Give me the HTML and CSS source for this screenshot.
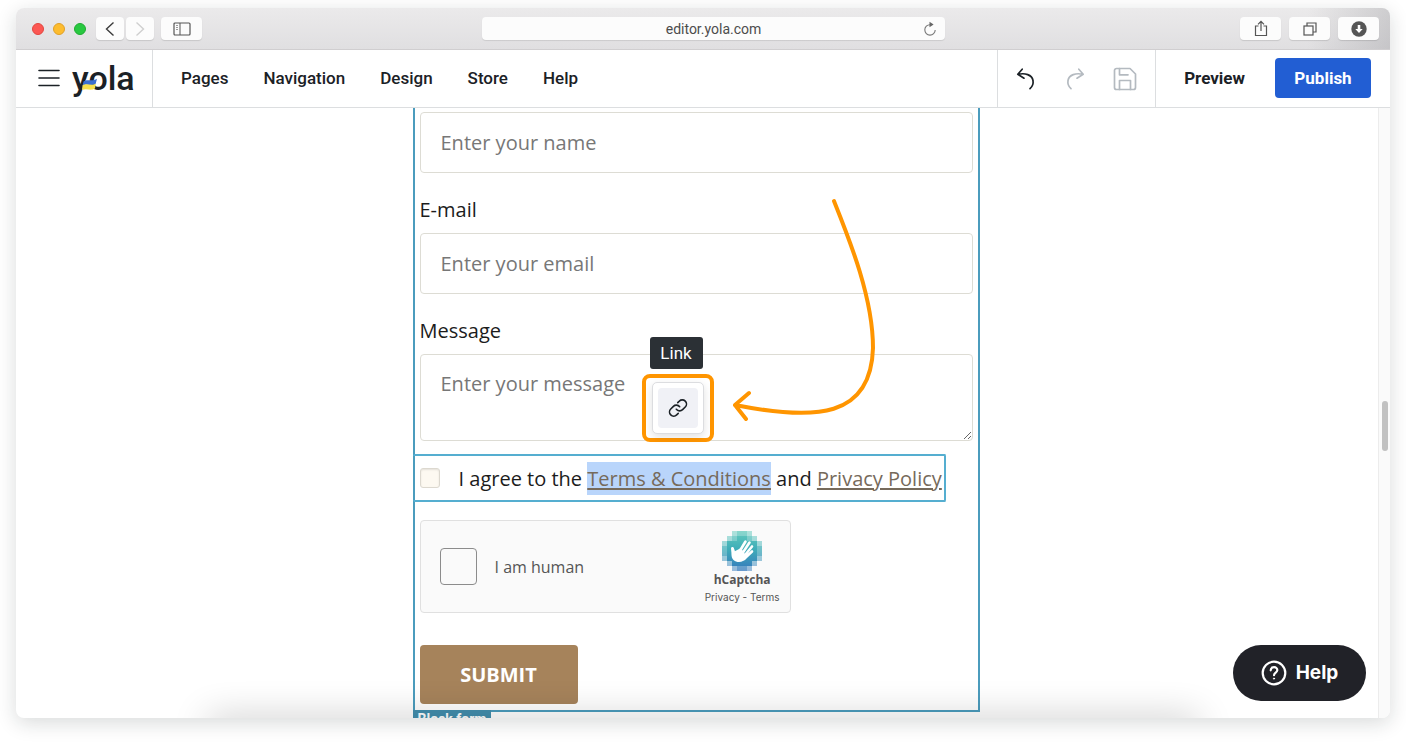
FILE: index.html
```html
<!DOCTYPE html>
<html lang="en">
<head>
<meta charset="utf-8">
<meta name="viewport" content="width=device-width, initial-scale=1">
<title>Yola editor</title>
<link rel="stylesheet" href="styles.css">
</head>
<body>
<div class="window">
  <div class="titlebar">
    <div class="titlebar-left">
      <span class="lights"><i class="light red"></i><i class="light amber"></i><i class="light green"></i></span>
      <span class="history">
        <button class="chrome-btn small" aria-label="Back"><svg width="12" height="16" viewBox="0 0 12 16"><path d="M9.500 1.500 2.500 8l7 6.500" fill="none" stroke="#3c3c3c" stroke-width="1.400"/></svg></button>
        <button class="chrome-btn small" aria-label="Forward"><svg width="12" height="16" viewBox="0 0 12 16"><path d="M2.500 1.500 9.500 8l-7 6.500" fill="none" stroke="#cfcfcf" stroke-width="1.400"/></svg></button>
      </span>
      <button class="chrome-btn" aria-label="Sidebar"><svg width="18" height="14" viewBox="0 0 18 14" fill="none" stroke="#555"><rect x="1" y="1" width="16" height="12" rx="1" stroke-width="1.200"/><path d="M7 1v12"/><path d="M3 3.500h2M3 5.500h2M3 7.500h2" stroke="#999"/></svg></button>
    </div>
    <div class="address"><span>editor.yola.com</span>
      <button class="reload" aria-label="Reload"><svg width="14" height="16" viewBox="0 0 14 16"><path d="M7 3.700A5.200 5.200 0 1 0 12.200 9" fill="none" stroke="#777" stroke-width="1.100"/><path d="M6.500.8 10.600 3.600 6.500 6.200z" fill="#666"/></svg></button>
    </div>
    <div class="titlebar-right">
      <button class="chrome-btn" aria-label="Share"><svg width="14" height="17" viewBox="0 0 14 17" fill="none" stroke="#555" stroke-width="1.200"><path d="M4.500 6H1.500v9.500h11V6h-3M7 11V1.500M4 4.300l3-3 3 3"/></svg></button>
      <button class="chrome-btn" aria-label="Tabs"><svg width="14" height="14" viewBox="0 0 14 14" fill="none" stroke="#555" stroke-width="1.200"><rect x="1" y="4" width="9" height="9"/><path d="M4 4V1h9v9h-3"/></svg></button>
      <button class="chrome-btn" aria-label="Downloads"><svg width="16" height="16" viewBox="0 0 16 16"><circle cx="8" cy="8" r="7.700" fill="#555"/><path d="M6.700 4h2.600v4h2.400L8 12 4.300 8h2.400z" fill="#fff"/></svg></button>
    </div>
  </div>

  <header class="toolbar">
    <div class="brand">
      <button class="icon-btn" aria-label="Menu"><svg width="22" height="18" viewBox="0 0 22 18"><path d="M1 1.500h20M1 9h20M1 16.500h20" stroke="#1b2126" stroke-width="1.600" stroke-linecap="round"/></svg></button>
      <a class="logo" href="#">yola<svg class="flag" width="16" height="13" viewBox="0 0 16 13"><path d="M1.500 3.500C5 .5 10 4 15 .8L13.600 6C9 8.600 5 4.800.5 8z" fill="#3b6fd0"/><path d="M.5 7.500C5 4.600 9 8.500 13.800 5.700L13 10.500C8 13.500 5 9.500 0 12z" fill="#f8e04c"/></svg></a>
    </div>
    <nav class="menu">
      <a href="#">Pages</a><a href="#">Navigation</a><a href="#">Design</a><a href="#">Store</a><a href="#">Help</a>
    </nav>
    <div class="history-tools">
      <button class="icon-btn" aria-label="Undo"><svg width="20" height="22" viewBox="0 0 20 22" fill="none" stroke="#1b2126" stroke-width="1.700" stroke-linecap="round" stroke-linejoin="round"><path d="M6.200 1.200 1.800 6.300 8 10.200M2 6.300C9 4.800 16 6.500 17 12.500 17.500 15.600 16.500 18.500 14 20.700"/></svg></button>
      <button class="icon-btn" aria-label="Redo"><svg width="20" height="22" viewBox="0 0 20 22" fill="none" stroke="#b4bac0" stroke-width="1.700" stroke-linecap="round" stroke-linejoin="round"><path d="M13.800 1.200 18.200 6.300 12 10.200M18 6.300C11 4.800 4 6.500 3 12.500 2.500 15.600 3.500 18.500 6 20.700"/></svg></button>
      <button class="icon-btn" aria-label="Save"><svg width="24" height="24" viewBox="0 0 24 24" fill="none" stroke="#b4bac0" stroke-width="1.700" stroke-linejoin="round" stroke-linecap="round"><path d="M3.500 1.500H17L22.500 7v13.500a2 2 0 0 1-2 2h-17a2 2 0 0 1-2-2v-17a2 2 0 0 1 2-2z"/><path d="M6.500 1.500v6.300h8.500M6.500 22.500v-9h11v9"/></svg></button>
    </div>
    <div class="actions">
      <button class="preview">Preview</button>
      <button class="publish">Publish</button>
    </div>
  </header>

  <main class="workspace">
    <div class="canvas">
      <form class="block">
        <input class="field" type="text" aria-label="Name" placeholder="Enter your name">
        <label class="label" for="email">E-mail</label>
        <input class="field" id="email" type="email" placeholder="Enter your email">
        <label class="label" for="message">Message</label>
        <div class="message">
          <textarea class="field area" id="message" placeholder="Enter your message"></textarea>
          <div class="link-tool">
            <button class="link-btn" type="button" aria-label="Link"><span class="link-face"><svg width="20" height="20" viewBox="0 0 24 24" fill="none" stroke="#1b2126" stroke-width="1.900" stroke-linecap="round" stroke-linejoin="round"><path d="M10 13.500a5 5 0 0 0 7.500.5l3.200-3.200a5 5 0 0 0-7.100-7.100L11.700 5.500"/><path d="M14 10.500a5 5 0 0 0-7.500-.5l-3.200 3.200a5 5 0 0 0 7.100 7.100l1.900-1.800"/></svg></span></button>
          </div>
          <span class="tooltip" role="tooltip">Link</span>
        </div>
        <div class="consent">
          <input class="tick" id="agree" type="checkbox">
          <label for="agree">I agree to the <a class="selected" href="#">Terms &amp; Conditions</a> and <a href="#">Privacy Policy</a></label>
        </div>
        <div class="captcha">
          <input class="human-box" id="human" type="checkbox">
          <label class="human" for="human">I am human</label>
          <div class="captcha-brand">
            <svg width="40" height="40" viewBox="0 0 40 40" shape-rendering="crispEdges">
              <defs><linearGradient id="sea" x1="0" y1="0" x2="0" y2="1"><stop offset="0" stop-color="#62cbbd"/><stop offset=".45" stop-color="#3fadb8"/><stop offset="1" stop-color="#3678bd"/></linearGradient></defs>
              <path d="M10 0h20v5h5v5h5v20h-5v5h-5v5H10v-5H5v-5H0V10h5V5h5z" fill="url(#sea)"/>
              <path d="M10 0h5v5h-5zM25 0h5v5h-5zM5 5h5v5H5zM30 5h5v5h-5zM0 10h5v5H0zM35 10h5v5h-5zM0 25h5v5H0zM35 25h5v5h-5zM5 30h5v5H5zM30 30h5v5h-5zM10 35h5v5h-5zM25 35h5v5h-5z" fill="#fafafa" opacity=".5"/>
              <path d="M15 0h10v5H15zM0 15h5v10H0zM35 15h5v10h-5zM15 35h10v5H15zM10 5h5v5h-5zM25 5h5v5h-5z" fill="#fafafa" opacity=".25"/>
              <g shape-rendering="auto"><path d="M12.500 27 10.500 17.500M16 23l7.500-12.500M19 24.500 27.500 11.500M21 26.500l9-11M22 28l8-7.500" stroke="#fff" stroke-width="2.600" stroke-linecap="round"/><path d="M9.200 17c1-2 2.800-.8 3.600 3.200L19 17l6 9c-2 4-6 5.600-9.500 5-4-.8-5.800-3.500-6-7z" fill="#fff"/></g>
            </svg>
            <strong>hCaptcha</strong>
            <span class="terms"><a href="#">Privacy</a> - <a href="#">Terms</a></span>
          </div>
        </div>
        <button class="submit" type="button">SUBMIT</button>
        <span class="block-name">Block form</span>
        <svg class="arrow" width="160" height="235" viewBox="0 0 160 235" fill="none" stroke="#ff9500" stroke-width="4" stroke-linecap="round" stroke-linejoin="round"><path d="M106 8C122 48 145 105 145 155C143 225 88 228 7 212M21 200 7 212 18 226"/></svg>
      </form>
    </div>
    <div class="track"><div class="thumb"></div></div>
    <button class="help"><svg width="26" height="26" viewBox="0 0 26 26" fill="none" stroke="#fff" stroke-linecap="round"><circle cx="13" cy="13" r="11.300" stroke-width="2.200"/><path d="M9.700 10.300c.2-4.300 6.800-4 6.600-.1-.1 2.300-3.300 2.500-3.300 5" stroke-width="2.200"/><circle cx="13" cy="18.600" r=".6" fill="#fff"/></svg>Help</button>
  </main>
</div>
</body>
</html>
```
FILE: styles.css
```css
* { box-sizing: border-box; }
body {
  margin: 0;
  min-height: 100vh;
  display: flex;
  padding: 8px 16px 24px;
  background: #fff;
  font-family: Roboto, "Liberation Sans", sans-serif;
  color: #1b2126;
}
button { border: 0; padding: 0; background: none; font: inherit; color: inherit; }
a { color: inherit; text-decoration: none; }
svg { display: block; }

.window {
  position: relative;
  flex: 1;
  min-width: 0;
  display: flex;
  flex-direction: column;
  border-radius: 8px;
  overflow: hidden;
  background: #fff;
  box-shadow: 0 5px 20px rgba(20, 30, 30, .16);
}
.window::after {
  content: "";
  position: absolute;
  left: 14%;
  right: 14%;
  bottom: -20px;
  height: 20px;
  box-shadow: 0 0 36px rgba(0, 0, 0, .24);
  pointer-events: none;
}

.titlebar {
  display: grid;
  grid-template-columns: 466fr 463fr 445fr;
  align-items: center;
  height: 42px;
  border-bottom: 1px solid #d0ced0;
  background: linear-gradient(90deg, transparent 94%, rgba(120, 120, 125, .25)), linear-gradient(#ebeaeb, #e0dfe1);
}
.titlebar-left { display: flex; align-items: center; gap: 7px; padding-left: 16px; }
.lights { display: flex; gap: 9px; margin-right: 3px; }
.light { width: 12px; height: 12px; border-radius: 50%; }
.red { background: #fc5753; border: 1px solid #e2463f; }
.amber { background: #fdbc2e; border: 1px solid #e0a028; }
.green { background: #28c840; border: 1px solid #1fab31; }
.history { display: flex; gap: 2px; }
.chrome-btn {
  display: grid;
  place-items: center;
  width: 41px;
  height: 23px;
  border-radius: 4px;
  background: #fcfcfc;
  box-shadow: 0 1px 1px rgba(0, 0, 0, .12);
}
.small { width: 28px; }
.address {
  display: flex;
  align-items: center;
  height: 23px;
  padding: 0 8px 0 22px;
  border-radius: 4px;
  background: #fcfcfc;
  box-shadow: 0 1px 1px rgba(0, 0, 0, .1);
  color: #4c4c4c;
  font-size: 14px;
}
.address span { flex: 1; text-align: center; }
.titlebar-right { display: flex; justify-content: flex-end; gap: 8px; padding-right: 11px; }

.toolbar { display: flex; height: 58px; border-bottom: 1px solid #dcdee0; }
.brand, .menu, .actions { padding-bottom: 2px; }
.brand { display: flex; align-items: center; gap: 12px; width: 137px; padding-left: 22px; border-right: 1px solid #dcdee0; }
.icon-btn { display: grid; place-items: center; }
.logo { position: relative; font-size: 34px; line-height: 40px; font-weight: 500; }
.flag { position: absolute; left: 10px; top: 20px; }
.menu { flex: 1; display: flex; align-items: center; gap: 35px; padding-left: 28px; font-size: 17px; font-weight: 500; }
.history-tools { display: flex; align-items: center; justify-content: space-between; width: 159px; padding: 0 18px; border: solid #dcdee0; border-width: 0 1px; }
.actions { display: flex; align-items: center; gap: 30px; padding-left: 28px; padding-right: 19px; font-size: 17px; font-weight: 700; }
.publish { width: 96px; height: 40px; border-radius: 4px; background: #225ed3; color: #fff; }

.workspace { position: relative; flex: 1; display: flex; }
.canvas { flex: 1; display: flex; justify-content: center; overflow: hidden; max-height: calc(100vh - 132px); padding-right: 2px; }
.block {
  position: relative;
  align-self: flex-start;
  width: 567px;
  padding: 4px 5px 6px;
  border: solid #4b9cbd;
  border-width: 0 2px 2px;
  font-family: "Open Sans", "Noto Sans", sans-serif;
  font-size: 20px;
  color: #1c1c1c;
}
.field {
  display: block;
  width: 100%;
  height: 61px;
  margin: 0;
  padding: 0 20px;
  border: 1px solid #dddcd4;
  border-radius: 4px;
  background: #fff;
  font: inherit;
}
.field::placeholder { color: #777; opacity: 1; }
.label { display: block; margin: 22px 0 8px; line-height: 30px; }
.message { position: relative; }
.area { height: 87px; padding-top: 14px; line-height: 30px; }
.link-tool {
  position: absolute;
  left: 222px;
  top: 20px;
  padding: 4px 6px;
  border: 4px solid #ff9500;
  border-radius: 8px;
  background: #fff;
}
.link-btn {
  display: grid;
  place-items: center;
  width: 52px;
  height: 52px;
  border: 1px solid #dcdde0;
  border-radius: 5px;
  background: #fff;
  box-shadow: 0 3px 8px rgba(0, 0, 0, .12);
}
.link-face { display: grid; place-items: center; width: 40px; height: 40px; border-radius: 4px; background: #f0f1f6; }
.tooltip {
  position: absolute;
  left: 230px;
  top: -17px;
  width: 53px;
  border-radius: 3px;
  background: #2b3035;
  color: #fff;
  font: 400 17px/32px Roboto, sans-serif;
  text-align: center;
}
.consent {
  display: flex;
  align-items: center;
  gap: 19px;
  width: fit-content;
  height: 48px;
  margin: 13px 0 18px -7px;
  padding: 0 2px 0 7px;
  border: 2px solid #55aed0;
  border-left-width: 0;
  border-radius: 2px;
  white-space: nowrap;
}
.consent a { color: #766a5b; text-decoration: underline; text-decoration-thickness: 2px; text-underline-offset: 2px; }
.consent .selected { background: #b9d5fb; padding: 3px 0; }
.tick { appearance: none; width: 20px; height: 20px; margin: 0; border: 1px solid #dcd8cf; border-radius: 3px; background: #fdf9f1; box-shadow: inset 0 1px 2px rgba(0, 0, 0, .1); }
.captcha {
  display: flex;
  align-items: center;
  width: 371px;
  height: 93px;
  padding: 0 10px 0 19px;
  border: 1px solid #e0e0e0;
  border-radius: 4px;
  background: #fafafa;
  color: #555;
}
.human-box { appearance: none; width: 37px; height: 37px; margin: 0 18px 0 0; border: 1px solid #8c8c8c; border-radius: 4px; background: #fafafa; }
.human { flex: 1; font-size: 16px; }
.captcha-brand { display: flex; flex-direction: column; align-items: center; padding-top: 2px; }
.captcha-brand strong { font-size: 12px; line-height: 18px; }
.terms { font: 10px/16px Inter, sans-serif; }
.submit {
  display: block;
  width: 158px;
  height: 59px;
  margin-top: 32px;
  border-radius: 4px;
  background: #a6835b;
  color: #fff;
  font-size: 20px;
  font-weight: 700;
}
.block-name {
  position: absolute;
  left: -2px;
  top: 100%;
  padding: 0 5px;
  background: #438fae;
  color: #fff;
  font: 700 14px/18px Roboto, sans-serif;
}
.arrow { position: absolute; left: 313px; top: 85px; pointer-events: none; }

.track { position: relative; width: 12px; border-left: 1px solid #ececec; background: #fafafa; }
.thumb { position: absolute; top: 48%; left: 3px; width: 6px; height: 50px; border-radius: 3px; background: #c1c1c1; }
.help {
  position: absolute;
  right: 24px;
  bottom: 17px;
  z-index: 1;
  display: flex;
  align-items: center;
  justify-content: center;
  gap: 9px;
  width: 133px;
  height: 56px;
  border-radius: 28px;
  background: #212228;
  color: #fff;
  font: 700 19px/24px Inter, sans-serif;
}
```
